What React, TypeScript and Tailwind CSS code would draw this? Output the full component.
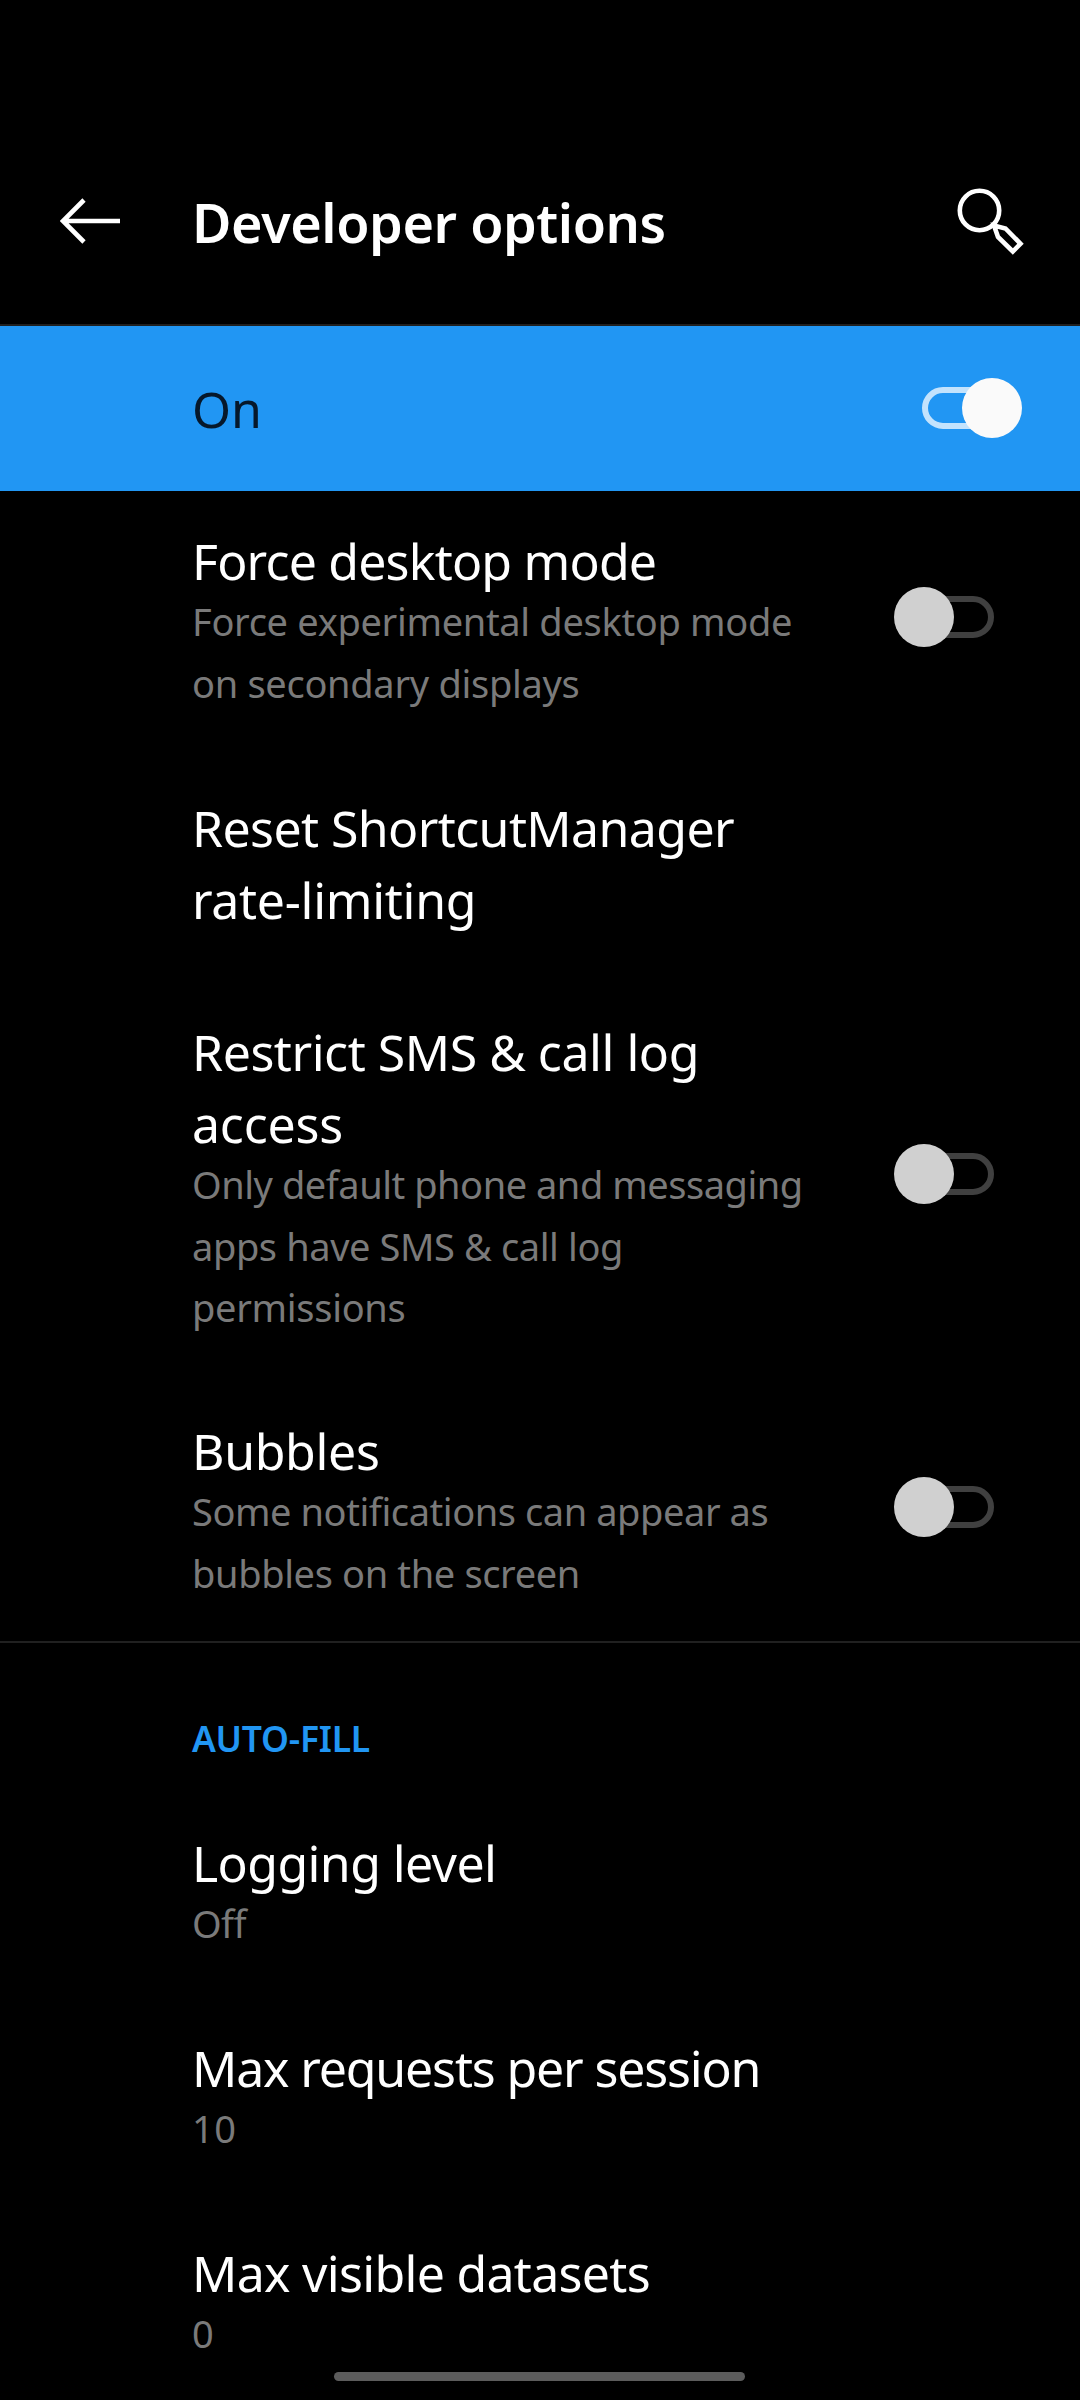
import type { ReactNode } from "react";

type Line = { text: string; tracking: string };

const line = (text: string, tracking: string): Line => ({ text, tracking });

function Switch({ on = false }: { on?: boolean }) {
  return (
    <div className="relative flex h-[60px] w-[100px] shrink-0 items-center">
      <div
        className={
          on
            ? "h-[42px] w-[94px] rounded-full border-[6px] border-[#c3e3fd]"
            : "ml-[6px] h-[42px] w-[94px] rounded-full border-[6px] border-[#404040]"
        }
      />
      <div
        className={
          on
            ? "absolute right-0 top-0 size-[60px] rounded-full bg-[#fafafa]"
            : "absolute left-0 top-0 size-[60px] rounded-full bg-[#d0d0d0]"
        }
      />
    </div>
  );
}

function Row({
  title,
  summary = [],
  height,
  children,
}: {
  title: Line[];
  summary?: Line[];
  height: string;
  children?: ReactNode;
}) {
  return (
    <div className={`flex items-start justify-between pl-[192px] pr-[86px] pt-[34px] ${height}`}>
      <div className="whitespace-nowrap">
        {title.map((l) => (
          <div key={l.text} className={`text-[50px] leading-[72px] text-white ${l.tracking}`}>
            {l.text}
          </div>
        ))}
        <div className="-mt-[6px]">
          {summary.map((l) => (
            <div key={l.text} className={`text-[38px] leading-[61.5px] text-[#7a7a7a] ${l.tracking}`}>
              {l.text}
            </div>
          ))}
        </div>
      </div>
      {children}
    </div>
  );
}

export default function App() {
  return (
    <div className="relative flex h-[2400px] w-[1080px] flex-col overflow-hidden bg-black font-['Noto_Sans',sans-serif]">
      <header className="flex h-[326px] shrink-0 border-b-2 border-[#202020]">
        <svg className="ml-[60px] mt-[190px] h-[60px] w-[62px]" viewBox="60 190 62 60" fill="none" stroke="white" strokeWidth="4.6">
          <path d="M120 221H63M84 200L63 221L84 242" />
        </svg>
        <h1 className="ml-[70px] mt-[186px] whitespace-nowrap text-[54px] font-semibold leading-[72px] tracking-[-0.45px] text-white">
          Developer options
        </h1>
        <svg className="ml-auto mr-[52px] mt-[184px] size-[74px]" viewBox="954 184 74 74" fill="none" stroke="white" strokeWidth="4.6">
          <circle cx="979.5" cy="210.5" r="19.7" />
          <path d="M994 225.500L998 237L1012.800 251.500L1020.500 243.700L1005.500 228.500Z" />
        </svg>
      </header>

      <section className="flex h-[165px] shrink-0 items-center justify-between bg-[#2196f3] pl-[192px] pr-[58px]">
        <div className="mt-px text-[50px] leading-[72px] text-[#06182b]">On</div>
        <div className="-mt-px">
          <Switch on />
        </div>
      </section>

      <main className="flex shrink-0 flex-col">
        <Row
          height="h-[267px]"
          title={[line("Force desktop mode", "tracking-[-0.8px]")]}
          summary={[
            line("Force experimental desktop mode", "tracking-[-0.32px]"),
            line("on secondary displays", "tracking-[-0.3px]"),
          ]}
        >
          <div className="mt-[62px]">
            <Switch />
          </div>
        </Row>
        <Row
          height="h-[224px]"
          title={[
            line("Reset ShortcutManager", "tracking-[-0.6px]"),
            line("rate-limiting", "tracking-[-0.3px]"),
          ]}
        />
        <Row
          height="h-[399px]"
          title={[
            line("Restrict SMS & call log", "tracking-[-0.46px]"),
            line("access", "tracking-[-0.2px]"),
          ]}
          summary={[
            line("Only default phone and messaging", "tracking-[-0.47px]"),
            line("apps have SMS & call log", "tracking-[-0.4px]"),
            line("permissions", "tracking-[-0.3px]"),
          ]}
        >
          <div className="mt-[128px]">
            <Switch />
          </div>
        </Row>
        <Row
          height="h-[262px] border-b-2 border-[#202020]"
          title={[line("Bubbles", "tracking-[-0.35px]")]}
          summary={[
            line("Some notifications can appear as", "tracking-[-0.43px]"),
            line("bubbles on the screen", "tracking-[-0.36px]"),
          ]}
        >
          <div className="mt-[62px]">
            <Switch />
          </div>
        </Row>

        <h2 className="h-[150px] pl-[192px] pt-[70px] text-[35.5px] font-semibold leading-[50px] tracking-[-0.25px] text-[#2196f3]">
          AUTO-FILL
        </h2>
        <Row
          height="h-[205px]"
          title={[line("Logging level", "tracking-[-0.6px]")]}
          summary={[line("Off", "tracking-[-0.6px]")]}
        />
        <Row
          height="h-[205px]"
          title={[line("Max requests per session", "tracking-[-1.16px]")]}
          summary={[line("10", "tracking-[0.5px]")]}
        />
        <Row
          height="h-[205px]"
          title={[line("Max visible datasets", "tracking-[-0.7px]")]}
          summary={[line("0", "tracking-normal")]}
        />
      </main>

      <div className="absolute bottom-[19px] left-[334px] h-[9px] w-[411px] rounded-full bg-[#5c5c5c]" />
    </div>
  );
}
